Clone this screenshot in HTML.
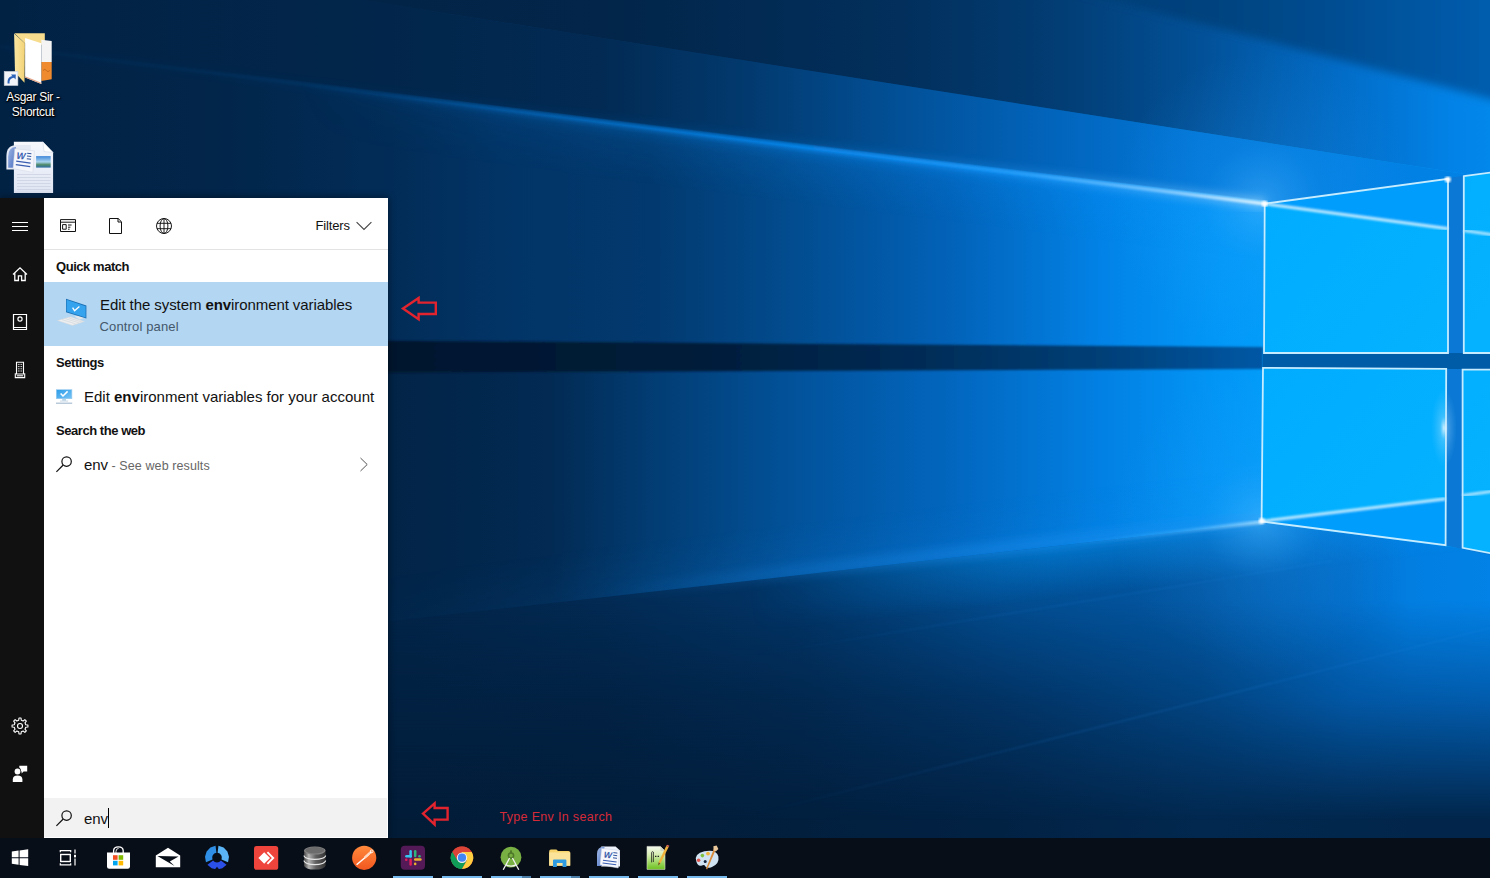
<!DOCTYPE html>
<html><head><meta charset="utf-8"><title>Desktop</title>
<style>
*{box-sizing:border-box;margin:0;padding:0}
html,body{width:1490px;height:878px;overflow:hidden;background:#03386f;font-family:"Liberation Sans",sans-serif}
#wall{position:absolute;left:0;top:0;width:1490px;height:878px;display:block}
.abs{position:absolute}

#rail{left:0;top:198px;width:44px;height:640px;background:#111}
#panel{left:44px;top:198px;width:344px;height:640px;background:#fff;color:#000}
#tabs{left:0;top:0;width:344px;height:52px;border-bottom:1px solid #e3e3e3}
.hd{font-weight:bold;font-size:13px;letter-spacing:-0.45px;color:#111;white-space:nowrap;line-height:16px}
.t15{font-size:15px;letter-spacing:-0.08px;color:#111;white-space:nowrap;line-height:18px}
.t13{font-size:13px;white-space:nowrap;line-height:16px}
#sel{left:0;top:84px;width:344px;height:64px;background:#b3d6f2}
#sbox{left:0;top:600px;width:343px;height:39px;background:#f2f2f2}
#task{left:0;top:838px;width:1490px;height:40px;background:#080e18}
.ind{position:absolute;top:38px;height:2px;background:#76b9ed}
.ind2{position:absolute;top:38px;height:2px;background:#4d7ea8}
.dl{color:#fff;font-size:12px;line-height:15px;text-align:center;white-space:nowrap;text-shadow:0 1px 2px #000,0 0 3px #000,1px 1px 1px #000}
svg{display:block}
</style></head><body>
<svg id="wall" viewBox="0 0 1490 878" width="1490" height="878">
<defs>
<linearGradient id="gT0" gradientUnits="userSpaceOnUse" x1="0" y1="0" x2="1490" y2="0"><stop offset="0.6711" stop-color="#02386c"/><stop offset="0.7262" stop-color="#023e76"/><stop offset="0.8054" stop-color="#02427d"/><stop offset="0.8725" stop-color="#024a8c"/><stop offset="0.9732" stop-color="#0259a7"/><stop offset="1.0000" stop-color="#025cad"/></linearGradient>
<linearGradient id="gWall" gradientUnits="userSpaceOnUse" x1="0" y1="0" x2="1490" y2="0"><stop offset="0.0000" stop-color="#022244"/><stop offset="0.1342" stop-color="#022549"/><stop offset="0.2617" stop-color="#022c57"/><stop offset="0.3356" stop-color="#023466"/><stop offset="0.4362" stop-color="#02396e"/><stop offset="0.5369" stop-color="#024d91"/><stop offset="0.6376" stop-color="#0262b8"/><stop offset="0.7383" stop-color="#0282e6"/><stop offset="0.8188" stop-color="#0298f8"/><stop offset="0.8477" stop-color="#029cf9"/><stop offset="1.0000" stop-color="#029cf9"/></linearGradient>
<linearGradient id="gWallLo" gradientUnits="userSpaceOnUse" x1="0" y1="0" x2="1490" y2="0"><stop offset="0.0000" stop-color="#022040"/><stop offset="0.1342" stop-color="#022244"/><stop offset="0.2617" stop-color="#022447"/><stop offset="0.3020" stop-color="#02264b"/><stop offset="0.3691" stop-color="#022a53"/><stop offset="0.4362" stop-color="#023c72"/><stop offset="0.5369" stop-color="#02539c"/><stop offset="0.6376" stop-color="#0266be"/><stop offset="0.7383" stop-color="#0280e3"/><stop offset="0.8188" stop-color="#0296f6"/><stop offset="0.8477" stop-color="#029cf9"/><stop offset="1.0000" stop-color="#029cf9"/></linearGradient>
<linearGradient id="gT2" gradientUnits="userSpaceOnUse" x1="0" y1="0" x2="1490" y2="0"><stop offset="0.0000" stop-color="#022244"/><stop offset="0.2617" stop-color="#02264b"/><stop offset="0.4027" stop-color="#022a53"/><stop offset="0.5034" stop-color="#023a6f"/><stop offset="0.6040" stop-color="#025097"/><stop offset="0.7047" stop-color="#0264bb"/><stop offset="0.8054" stop-color="#0277d8"/><stop offset="0.9060" stop-color="#0280e3"/><stop offset="1.0000" stop-color="#0282e6"/></linearGradient>
<linearGradient id="gT1" gradientUnits="userSpaceOnUse" x1="0" y1="0" x2="1490" y2="0"><stop offset="0.0000" stop-color="#022447"/><stop offset="0.2617" stop-color="#022447"/><stop offset="0.4027" stop-color="#022549"/><stop offset="0.6040" stop-color="#022f5c"/><stop offset="0.7047" stop-color="#023c72"/><stop offset="0.8054" stop-color="#025097"/><stop offset="0.9060" stop-color="#026eca"/><stop offset="0.9732" stop-color="#0282e6"/><stop offset="1.0000" stop-color="#0287ea"/></linearGradient>
<linearGradient id="gDk" gradientUnits="userSpaceOnUse" x1="0" y1="0" x2="1490" y2="0"><stop offset="0.0000" stop-color="#02142a"/><stop offset="0.2617" stop-color="#02162e"/><stop offset="0.4698" stop-color="#021d3a"/><stop offset="0.6040" stop-color="#022a53"/><stop offset="0.7383" stop-color="#023f77"/><stop offset="0.8477" stop-color="#0258a5"/><stop offset="1.0000" stop-color="#0258a5"/></linearGradient>
<linearGradient id="gF6" gradientUnits="userSpaceOnUse" x1="0" y1="0" x2="1490" y2="0"><stop offset="0.0000" stop-color="#021e3c"/><stop offset="0.2685" stop-color="#022447"/><stop offset="0.4027" stop-color="#022a53"/><stop offset="0.5369" stop-color="#023466"/><stop offset="0.6711" stop-color="#024c8f"/><stop offset="0.8054" stop-color="#0256a2"/><stop offset="0.9060" stop-color="#026eca"/><stop offset="0.9463" stop-color="#027ee1"/><stop offset="1.0000" stop-color="#0282e6"/></linearGradient>
<linearGradient id="gF7" gradientUnits="userSpaceOnUse" x1="0" y1="0" x2="1490" y2="0"><stop offset="0.0000" stop-color="#021e3c"/><stop offset="0.2685" stop-color="#022142"/><stop offset="0.4027" stop-color="#022244"/><stop offset="0.5369" stop-color="#02284f"/><stop offset="0.6711" stop-color="#023364"/><stop offset="0.8054" stop-color="#024481"/><stop offset="0.9060" stop-color="#0257a4"/><stop offset="0.9463" stop-color="#025aa9"/><stop offset="1.0000" stop-color="#025cad"/></linearGradient>
<linearGradient id="gF8" gradientUnits="userSpaceOnUse" x1="0" y1="0" x2="1490" y2="0"><stop offset="0.0000" stop-color="#021a35"/><stop offset="0.2685" stop-color="#021c38"/><stop offset="0.4027" stop-color="#021d3a"/><stop offset="0.5369" stop-color="#021f3e"/><stop offset="0.6711" stop-color="#022244"/><stop offset="0.8054" stop-color="#02284f"/><stop offset="0.9060" stop-color="#02274d"/><stop offset="0.9463" stop-color="#02264b"/><stop offset="1.0000" stop-color="#02264b"/></linearGradient>
<linearGradient id="mF6g" gradientUnits="userSpaceOnUse" x1="0" y1="600" x2="0" y2="700"><stop offset="0" stop-color="#fff"/><stop offset="1" stop-color="#000"/></linearGradient><mask id="mF6" maskUnits="userSpaceOnUse" x="0" y="0" width="1490" height="878"><rect x="0" y="0" width="1490" height="878" fill="url(#mF6g)"/></mask>
<linearGradient id="mF7g" gradientUnits="userSpaceOnUse" x1="0" y1="700" x2="0" y2="820"><stop offset="0" stop-color="#fff"/><stop offset="1" stop-color="#000"/></linearGradient><mask id="mF7" maskUnits="userSpaceOnUse" x="0" y="0" width="1490" height="878"><rect x="0" y="0" width="1490" height="878" fill="url(#mF7g)"/></mask>
<linearGradient id="gRayA" gradientUnits="userSpaceOnUse" x1="0" y1="0" x2="1263" y2="0">
<stop offset="0" stop-color="#0a8cf5" stop-opacity="0.02"/><stop offset="0.3" stop-color="#0a8cf5" stop-opacity="0.08"/><stop offset="0.6" stop-color="#0a8cf5" stop-opacity="0.3"/><stop offset="0.8" stop-color="#2aa4ff" stop-opacity="0.7"/><stop offset="0.92" stop-color="#7cc8ff" stop-opacity="0.95"/><stop offset="1" stop-color="#d8f2ff" stop-opacity="1"/></linearGradient>
<linearGradient id="gBelowA" gradientUnits="userSpaceOnUse" x1="600" y1="118.3" x2="592.6" y2="177.8"><stop offset="0.0000" stop-color="#0a8cf5" stop-opacity="0.00"/><stop offset="0.0250" stop-color="#0a8cf5" stop-opacity="0.30"/><stop offset="0.0667" stop-color="#0a8cf5" stop-opacity="0.75"/><stop offset="0.1167" stop-color="#0a8cf5" stop-opacity="0.45"/><stop offset="0.1667" stop-color="#0a8cf5" stop-opacity="0.25"/><stop offset="0.3333" stop-color="#0a8cf5" stop-opacity="0.12"/><stop offset="0.6667" stop-color="#0a8cf5" stop-opacity="0.05"/><stop offset="1.0000" stop-color="#0a8cf5" stop-opacity="0.00"/></linearGradient>
<linearGradient id="gAboveA" gradientUnits="userSpaceOnUse" x1="600" y1="118" x2="606" y2="68">
<stop offset="0" stop-color="#1c8cf0" stop-opacity="0.12"/><stop offset="1" stop-color="#1c8cf0" stop-opacity="0"/></linearGradient>
<linearGradient id="gAboveF" gradientUnits="userSpaceOnUse" x1="800" y1="573" x2="794" y2="523">
<stop offset="0" stop-color="#1c8cf0" stop-opacity="0.1"/><stop offset="1" stop-color="#1c8cf0" stop-opacity="0"/></linearGradient>
<radialGradient id="gGlow" gradientUnits="userSpaceOnUse" cx="1263" cy="202" r="150">
<stop offset="0" stop-color="#50b8ff" stop-opacity="0.5"/><stop offset="0.4" stop-color="#2aa0f8" stop-opacity="0.15"/><stop offset="1" stop-color="#2aa0f8" stop-opacity="0"/></radialGradient>
<radialGradient id="gGlow2" gradientUnits="userSpaceOnUse" cx="1262" cy="520" r="150">
<stop offset="0" stop-color="#50b8ff" stop-opacity="0.5"/><stop offset="0.4" stop-color="#2aa0f8" stop-opacity="0.15"/><stop offset="1" stop-color="#2aa0f8" stop-opacity="0"/></radialGradient>
<radialGradient id="gFlare" gradientUnits="userSpaceOnUse" cx="1444" cy="428" r="26">
<stop offset="0" stop-color="#ffffff" stop-opacity="0.8"/><stop offset="0.3" stop-color="#bfe6ff" stop-opacity="0.3"/><stop offset="1" stop-color="#7accff" stop-opacity="0"/></radialGradient>
<linearGradient id="gPane" gradientUnits="userSpaceOnUse" x1="1263" y1="200" x2="1447" y2="360">
<stop offset="0" stop-color="#01acff"/><stop offset="1" stop-color="#04b2ff"/></linearGradient>
<linearGradient id="gPane2" gradientUnits="userSpaceOnUse" x1="1263" y1="368" x2="1447" y2="540">
<stop offset="0" stop-color="#01acff"/><stop offset="1" stop-color="#04b2ff"/></linearGradient>
<linearGradient id="gMaskL" gradientUnits="userSpaceOnUse" x1="300" y1="0" x2="800" y2="0"><stop offset="0" stop-color="#000"/><stop offset="0.3" stop-color="#444"/><stop offset="1" stop-color="#fff"/></linearGradient>
<mask id="mL" maskUnits="userSpaceOnUse" x="0" y="-60" width="1490" height="940"><rect x="0" y="-60" width="1490" height="940" fill="url(#gMaskL)"/></mask>
<linearGradient id="gRayF" gradientUnits="userSpaceOnUse" x1="1060" y1="0" x2="1262" y2="0"><stop offset="0" stop-color="#2aa4ff" stop-opacity="0"/><stop offset="0.6" stop-color="#5cbcff" stop-opacity="0.6"/><stop offset="1" stop-color="#d8f2ff" stop-opacity="1"/></linearGradient>
<linearGradient id="gBelowF" gradientUnits="userSpaceOnUse" x1="1100" y1="538" x2="1106.4" y2="593">
<stop offset="0" stop-color="#0296fa" stop-opacity="0.55"/><stop offset="1" stop-color="#0296fa" stop-opacity="0"/></linearGradient>
<linearGradient id="gMaskR" gradientUnits="userSpaceOnUse" x1="750" y1="0" x2="1050" y2="0"><stop offset="0" stop-color="#000"/><stop offset="1" stop-color="#fff"/></linearGradient>
<linearGradient id="gMaskR2" gradientUnits="userSpaceOnUse" x1="600" y1="0" x2="1000" y2="0"><stop offset="0" stop-color="#000"/><stop offset="1" stop-color="#fff"/></linearGradient>
<mask id="mR2" maskUnits="userSpaceOnUse" x="0" y="0" width="1490" height="878"><rect x="0" y="0" width="1490" height="878" fill="url(#gMaskR2)"/></mask>
<mask id="mR" maskUnits="userSpaceOnUse" x="0" y="0" width="1490" height="878"><rect x="0" y="0" width="1490" height="878" fill="url(#gMaskR)"/></mask>
<mask id="cFloor" maskUnits="userSpaceOnUse" x="0" y="0" width="1490" height="878"><polygon points="0,665.5 1263,522.5 1490,552 1490,878 0,878" fill="#fff"/></mask>
<filter id="b1" x="-5%" y="-5%" width="110%" height="110%"><feGaussianBlur stdDeviation="0.8"/></filter>
<filter id="b2" x="-5%" y="-5%" width="110%" height="110%"><feGaussianBlur stdDeviation="1.5"/></filter>
<filter id="b4" x="-5%" y="-5%" width="110%" height="110%"><feGaussianBlur stdDeviation="4"/></filter>
<filter id="b8" x="-10%" y="-10%" width="120%" height="120%"><feGaussianBlur stdDeviation="8"/></filter>
</defs>
<rect width="1490" height="878" fill="url(#gWall)"/>
<rect x="0" y="356" width="1490" height="522" fill="url(#gWallLo)"/>
<polygon points="0,-57 1490,178 1490,240 1263,200.5 0,44" fill="url(#gT2)"/>
<polygon points="0,0 1490,0 1490,178 0,-57" fill="url(#gT1)"/>
<polygon points="1070,-10 1500,-10 1500,101.4" fill="url(#gT0)" filter="url(#b4)"/>
<polygon points="0,338 1263,347 1263,369 0,374" fill="url(#gDk)" filter="url(#b1)"/>
<g mask="url(#cFloor)">
<rect x="0" y="500" width="1490" height="378" fill="url(#gF8)"/>
<rect x="0" y="500" width="1490" height="378" fill="url(#gF7)" mask="url(#mF7)"/>
<rect x="0" y="500" width="1490" height="378" fill="url(#gF6)" mask="url(#mF6)"/>
<polygon points="700,586.2 1263,522.5 1490,552 1490,700 700,700" fill="url(#gBelowF)" mask="url(#mR)"/>
<g mask="url(#mR)" stroke="#2a8ae6" fill="none"><line x1="700" y1="664" x2="1332" y2="561" stroke-width="1.6" opacity="0.16" filter="url(#b1)"/><line x1="700" y1="828" x2="1490" y2="628" stroke-width="1.6" opacity="0.2" filter="url(#b1)"/></g>

</g>
<g mask="url(#mL)">
<polygon points="0,44 1263,200.5 1263,347 0,338" fill="url(#gBelowA)"/>
<polygon points="0,380 1263,380 1263,522.5 0,665.5" fill="url(#gAboveF)"/>
</g>
<line x1="600" y1="593.5" x2="1263" y2="518.5" stroke="#1a90f0" stroke-width="14" opacity="0.4" filter="url(#b4)" mask="url(#mR2)"/>
<rect x="1060" y="20" width="430" height="380" fill="url(#gGlow)"/>
<rect x="1060" y="340" width="430" height="380" fill="url(#gGlow2)"/>
<line x1="0" y1="46.6" x2="1264.7" y2="203.7" stroke="url(#gRayA)" stroke-width="10" opacity="0.4" filter="url(#b4)"/>
<line x1="0" y1="46.6" x2="1264.7" y2="203.7" stroke="url(#gRayA)" stroke-width="3.6" filter="url(#b1)"/>
<line x1="1060" y1="545.4" x2="1262" y2="522" stroke="url(#gRayF)" stroke-width="3" opacity="0.8" filter="url(#b2)"/>
<polygon points="1264,203 1448,178 1490,172 1490,555 1448,546 1262,521" fill="#0a78d4"/>
<polygon points="1263,353 1490,353 1490,369 1263,369" fill="#015ca8"/>
<polygon points="1264.7,203.7 1448,178.8 1448,353 1264,353" fill="url(#gPane)"/>
<polygon points="1264.7,203.7 1448,178.8 1448,228.6" fill="#019dfd"/>
<polygon points="1263,367.8 1446.2,368.9 1445.6,545.2 1261.6,521.4" fill="url(#gPane2)"/>
<polygon points="1261.6,521.4 1445.5,498.8 1445.6,545.2" fill="#019dfd"/>
<polygon points="1463.8,176.2 1495,172 1495,353 1463.8,353" fill="url(#gPane)"/>
<polygon points="1462.6,369.6 1495,369.6 1495,554 1462.6,547.8" fill="url(#gPane2)"/>
<line x1="1264.7" y1="203.7" x2="1448" y2="228.6" stroke="#d4f0ff" stroke-width="3.2" opacity="0.85" filter="url(#b1)"/>
<line x1="1261.6" y1="521.4" x2="1445.5" y2="498.8" stroke="#d4f0ff" stroke-width="3.2" opacity="0.85" filter="url(#b1)"/>
<line x1="1463.8" y1="230.6" x2="1495" y2="235" stroke="#d4f0ff" stroke-width="3" opacity="0.8" filter="url(#b1)"/>
<line x1="1462.6" y1="495.4" x2="1495" y2="491" stroke="#d4f0ff" stroke-width="3" opacity="0.8" filter="url(#b1)"/>
<g fill="none" stroke="#c6ecff" stroke-width="1.8">
<polygon points="1264.7,203.7 1448,178.8 1448,353 1264,353"/>
<polygon points="1263,367.8 1446.2,368.9 1445.6,545.2 1261.6,521.4"/>
<polygon points="1463.8,176.2 1495,172 1495,353 1463.8,353"/>
<polygon points="1462.6,369.6 1495,369.6 1495,554 1462.6,547.8"/>
</g>
<line x1="1447.6" y1="179" x2="1447.6" y2="353" stroke="#e6f7ff" stroke-width="3.4" filter="url(#b1)"/>
<line x1="1445.8" y1="369" x2="1445.8" y2="545" stroke="#e6f7ff" stroke-width="3" filter="url(#b1)"/>
<ellipse cx="1444" cy="428" rx="26" ry="26" fill="url(#gFlare)" transform="translate(1444 428) scale(0.5 1.5) translate(-1444 -428)"/>
<circle cx="1264.7" cy="203.7" r="3" fill="#fff" filter="url(#b1)"/>
<circle cx="1261.8" cy="521" r="3" fill="#fff" filter="url(#b1)"/>
<circle cx="1447.8" cy="179.4" r="3" fill="#fff" filter="url(#b1)"/>
</svg>

<!-- desktop icons -->
<div class="abs" id="desk">
<svg class="abs" style="left:0;top:28px" width="60" height="62" viewBox="0 28 60 62">
<defs><linearGradient id="fy" x1="0" y1="0" x2="1" y2="0"><stop offset="0" stop-color="#fbe7a2"/><stop offset="1" stop-color="#f3d276"/></linearGradient></defs>
<polygon points="14.4,33.2 44.8,33.2 44.8,45 24.9,43.3" fill="#f6dc8c"/>
<polygon points="41.3,39.7 51.7,41 51.7,62 41.3,62" fill="#f4f4f4"/>
<polygon points="41.3,61.9 51.7,61.9 51.7,79.2 41.3,81" fill="#f08a2e"/>
<path d="M43 70.5q2-2.4 3.4 0t3.4 0" stroke="#b8651c" stroke-width="0.8" fill="none"/>
<polygon points="25.1,37.9 41.3,43.3 41.3,84 25.1,77.4" fill="#fff"/>
<polygon points="25.1,76.2 41.3,82.8 41.3,84 25.1,77.4" fill="#e3a284"/>
<polygon points="14.1,33.4 24.9,43.3 24.5,82.8 15,72.6" fill="url(#fy)"/>
<rect x="4.2" y="71.4" width="13.7" height="14.1" fill="#f2f4f7" stroke="#c9ced6" stroke-width="0.6"/>
<path d="M7.6 83.4 C7.2 78.6 9.4 76.2 12.4 76.2 L11 74.4 L15.8 74.6 L15.6 79.6 L14 77.8 C11.2 78 9.2 79.8 9.6 83.4Z" fill="#2b62b8"/>
</svg>
<div class="abs dl" style="left:1px;top:90px;width:64px;letter-spacing:-0.3px">Asgar Sir -<br>Shortcut</div>
<svg class="abs" style="left:0;top:138px" width="60" height="60" viewBox="0 138 60 60">
<defs><linearGradient id="pg" x1="0" y1="0" x2="0" y2="1"><stop offset="0" stop-color="#f6f8fd"/><stop offset="1" stop-color="#dfe5f3"/></linearGradient>
<linearGradient id="sky" x1="0" y1="0" x2="0" y2="1"><stop offset="0" stop-color="#3f86d8"/><stop offset="0.5" stop-color="#a8d4ee"/><stop offset="0.75" stop-color="#4f8a6a"/><stop offset="1" stop-color="#2e6fa8"/></linearGradient>
<linearGradient id="wb" x1="0" y1="0" x2="1" y2="1"><stop offset="0" stop-color="#9fb6e4"/><stop offset="1" stop-color="#4a6fc0"/></linearGradient></defs>
<polygon points="13.9,141.8 42.9,141.8 53.1,152.4 53.1,192.9 13.9,192.9" fill="url(#pg)"/>
<polygon points="42.9,141.8 53.1,152.4 44,151.6" fill="#fff" stroke="#c9d0e0" stroke-width="0.5"/>
<path d="M17 174.5H50.6M17 177.5H50.6M17 180.5H50.6M17 183.5H50.6M17 186.5H50.6M17 189.5H50.6" stroke="#c9cfe0" stroke-width="0.7"/>
<rect x="36.1" y="156.1" width="14.6" height="11.5" fill="url(#sky)"/>
<path d="M6.4 169.6 V156 Q6.4 145 17 145 H30.8 V169.6Z" fill="#e4e9f4"/>
<path d="M8.2 167.8 V156.6 Q8.2 147 16 147 L14.4 167.8Z" fill="url(#wb)"/>
<polygon points="14.8,148.7 34.4,150.9 32.9,172.4 13,168.7" fill="#f4f6fb" stroke="#cfd5e2" stroke-width="0.5"/>
<text x="16.4" y="158.6" font-family="Liberation Sans, sans-serif" font-style="italic" font-weight="bold" font-size="9.5" fill="#3a5db0" transform="rotate(5 16 158)">W</text>
<path d="M27.2 153.2L31.4 153.7M27 156L31.2 156.5M26.8 158.8L31 159.3" stroke="#33559f" stroke-width="1.1"/>
<path d="M16.2 161.2L30.6 163.2M15.8 164.6L30.2 166.6" stroke="#3a5db0" stroke-width="1.2"/>
</svg>
</div>
<!-- search rail -->
<div class="abs" style="left:0;top:198px;width:388px;height:640px;box-shadow:0 0 7px 1px rgba(0,0,0,0.4)"></div>
<div class="abs" id="rail"></div>
<div class="abs" id="panel">
 <div class="abs" id="tabs"></div>
 <div class="abs t13" style="left:271.5px;top:20px;color:#111;letter-spacing:-0.15px">Filters</div>
 <div class="abs hd" style="left:12px;top:61px">Quick match</div>
 <div class="abs" id="sel"></div>
 <div class="abs t15" style="left:56px;top:98px">Edit the system <b>env</b>ironment variables</div>
 <div class="abs t13" style="left:55.5px;top:121px;color:#44586b;letter-spacing:0.15px">Control panel</div>
 <div class="abs hd" style="left:12px;top:157px">Settings</div>
 <div class="abs t15" style="left:40px;top:190px;letter-spacing:0">Edit <b>env</b>ironment variables for your account</div>
 <div class="abs hd" style="left:12px;top:225px">Search the web</div>
 <div class="abs t15" style="left:40px;top:258px">env<span style="font-size:12.5px;letter-spacing:0.1px;color:#666"> - See web results</span></div>
 <div class="abs" id="sbox"></div>
 <div class="abs t15" style="left:40px;top:612px">env</div>
 <div class="abs" style="left:64px;top:610px;width:1px;height:20px;background:#000"></div>
</div>

<!-- rail icons -->
<svg class="abs" style="left:0;top:198px" width="44" height="640" viewBox="0 198 44 640" fill="none" stroke="#fff" stroke-width="1.1">
<path d="M12 222.5H28M12 226.5H28M12 230.5H28" stroke-width="1"/>
<path d="M13 274.5 L20 267.8 L27 274.5 M14.8 273.2V280.5H18.4V275.8H21.6V280.5H25.2V273.2" stroke-width="1.3" stroke-linejoin="miter"/>
<path d="M13.5 314.5H26.5V329.5H13.5Z M13.5 327.5H26.5" stroke-width="1.2"/><circle cx="20" cy="319" r="2.1" stroke-width="1.2"/>
<path d="M16.5 362.2H23.5V374H16.5Z M15.3 373.2 V377.6H24.7V373.2" stroke-width="1.1"/>
<path d="M17.9 364.4H18.8M19.55 364.4H20.45M21.2 364.4H22.1M17.9 366.6H18.8M19.55 366.6H20.45M21.2 366.6H22.1M17.9 368.8H18.8M19.55 368.8H20.45M21.2 368.8H22.1M17.9 371H18.8M19.55 371H20.45M21.2 371H22.1" stroke-width="1"/><path d="M16.8 375.8H23.2" stroke-width="1.1"/>
<g transform="translate(20 726)"><circle r="2.5" stroke-width="1.1"/><path d="M-1.28 -5.76 L-1.04 -7.93 L1.04 -7.93 L1.28 -5.76 L3.17 -4.98 L4.87 -6.35 L6.35 -4.87 L4.98 -3.17 L5.76 -1.28 L7.93 -1.04 L7.93 1.04 L5.76 1.28 L4.98 3.17 L6.35 4.87 L4.87 6.35 L3.17 4.98 L1.28 5.76 L1.04 7.93 L-1.04 7.93 L-1.28 5.76 L-3.17 4.98 L-4.87 6.35 L-6.35 4.87 L-4.98 3.17 L-5.76 1.28 L-7.93 1.04 L-7.93 -1.04 L-5.76 -1.28 L-4.98 -3.17 L-6.35 -4.87 L-4.87 -6.35 L-3.17 -4.98Z" stroke-width="1.1" stroke-linejoin="round"/></g>
<g stroke="none" fill="#fff"><circle cx="17.5" cy="771.5" r="2.9"/><path d="M12.8 782 V779.6 Q12.8 775.6 17.5 775.6 Q22.4 775.6 22.4 779.6 V782Z"/><path d="M19.3 765.8H27.2V771.6H23.6L21.6 773.6V771.6H21.2 Q21 768.2 19.3 767.4Z"/></g>
</svg>
<!-- panel icons -->
<svg class="abs" style="left:44px;top:198px" width="344" height="640" viewBox="44 198 344 640" fill="none" stroke="#111" stroke-width="1.1">
<path d="M60.5 219.6H75.5V231.5H60.5Z M60.5 222.2H75.5 M62.6 224.6H66.2V229.2H62.6Z M68 225H71.6 M68 227.2H70.4 M68 229.2H69.6" stroke-width="1"/>
<path d="M109.5 218.5H118.2L121.5 221.8V233.5H109.5Z M118 218.6V222H121.4" stroke-width="1"/>
<g stroke-width="0.95"><circle cx="164" cy="226" r="7.5"/><ellipse cx="164" cy="226" rx="3.9" ry="7.5"/><path d="M157 223.3H171M157 228.7H171M164 218.5V233.5"/></g>
<path d="M356.6 222.2L364 229.5L371.4 222.2" stroke="#444" stroke-width="1.1"/>
<g stroke-width="1.2"><circle cx="66.6" cy="461.6" r="4.7"/><path d="M63.2 465L56.4 471.8"/></g>
<path d="M360.5 458L367.2 464.5L360.5 471" stroke="#555" stroke-width="1"/>
<g stroke-width="1.2"><circle cx="66.6" cy="815.6" r="4.7"/><path d="M63.2 819L56.4 825.8"/></g>
</svg>

<!-- result icons -->
<svg class="abs" style="left:52px;top:294px" width="40" height="36" viewBox="52 294 40 36">
<polygon points="56.8,320.4 70.6,316.6 85,321.4 72.4,325.8" fill="#d9dde0"/>
<polygon points="58.6,320.5 70.6,317.3 83,321.4 72.4,325" fill="#eceeef"/>
<path d="M62 319.6L75.6 323.9M65.4 318.7L79 322.8M68.6 317.9L82 322" stroke="#cfd4d8" stroke-width="0.6"/>
<polygon points="74.6,316.6 80.4,315 85.4,317.4 79.6,319.4" fill="#e4e7ea"/>
<polygon points="66,298.8 86.4,305.6 86.4,318.6 66,312.2" fill="#1b6fb3"/>
<polygon points="66.6,299.8 85.6,306.2 85.6,317.4 66.6,311.4" fill="#36a3ee"/>
<path d="M72.6 307.6L74.6 310.8L79.4 306.6" fill="none" stroke="#fff" stroke-width="1.3"/>
</svg>
<svg class="abs" style="left:54px;top:387px" width="20" height="19" viewBox="54 387 20 19">
<defs><linearGradient id="scr" x1="0" y1="0" x2="1" y2="1"><stop offset="0" stop-color="#2f9ee9"/><stop offset="1" stop-color="#74c2f4"/></linearGradient></defs>
<rect x="56" y="389.2" width="16.2" height="9.8" fill="#9ccdf0"/>
<rect x="56.8" y="390" width="14.6" height="8.2" fill="url(#scr)"/>
<path d="M60.6 393.4L63 396L67.6 391.4" fill="none" stroke="#fff" stroke-width="1.5"/>
<rect x="62.2" y="399" width="3.8" height="1.8" fill="#b9d3e6"/>
<rect x="60" y="400.6" width="8.2" height="0.9" fill="#c5d6e3"/>
<rect x="56" y="402.6" width="16.2" height="1.2" fill="#a9bfd3"/>
</svg>
<!-- annotations -->
<div class="abs" style="left:499.5px;top:809px;font-size:12.5px;line-height:16px;letter-spacing:0.32px;color:#d62a38;white-space:nowrap" id="anno">Type Env In search</div>

<svg class="abs" style="left:396px;top:290px" width="60" height="40" viewBox="396 290 60 40" fill="none" stroke="#e3242f" stroke-width="2.4" stroke-linejoin="miter">
<path d="M403 308.6L418.6 298V302.6H435.8V314H418.6V319.2Z"/>
</svg>
<svg class="abs" style="left:414px;top:796px" width="44" height="36" viewBox="414 796 44 36" fill="none" stroke="#e3242f" stroke-width="2.4" stroke-linejoin="miter">
<path d="M423 813.6L434.6 803.4V808H447.6V819.6H434.6V824.4Z"/>
</svg>
<!-- taskbar -->
<div class="abs" id="task">
<div class="ind" style="left:393px;width:40px"></div>
<div class="ind" style="left:442px;width:40px"></div>
<div class="ind" style="left:491px;width:31px"></div><div class="ind2" style="left:522px;width:9px"></div>
<div class="ind" style="left:540px;width:31px"></div><div class="ind2" style="left:571px;width:9px"></div>
<div class="ind" style="left:589px;width:40px"></div>
<div class="ind" style="left:638px;width:40px"></div>
<div class="ind" style="left:687px;width:40px"></div>
<svg class="abs" style="left:0;top:0" width="740" height="40" viewBox="0 838 740 40">
<defs>
<linearGradient id="dbg" x1="0" y1="0" x2="1" y2="0"><stop offset="0" stop-color="#444"/><stop offset="0.22" stop-color="#b4b4b4"/><stop offset="0.55" stop-color="#606060"/><stop offset="1" stop-color="#333"/></linearGradient>
<linearGradient id="pm" x1="0" y1="0" x2="0" y2="1"><stop offset="0" stop-color="#ff8a3c"/><stop offset="1" stop-color="#f2571f"/></linearGradient>
<linearGradient id="npp" x1="0" y1="0" x2="0" y2="1"><stop offset="0" stop-color="#f4f8ee"/><stop offset="0.35" stop-color="#d8eeb4"/><stop offset="1" stop-color="#6cc21e"/></linearGradient>
<linearGradient id="wd" x1="0" y1="0" x2="1" y2="1"><stop offset="0" stop-color="#a9c0ea"/><stop offset="1" stop-color="#3f68bd"/></linearGradient>
</defs>
<!-- start -->
<path d="M11.8 851.6L18.6 850.6V857.2H11.8Z M19.6 850.5L28.2 849.3V857.2H19.6Z M11.8 858.2H18.6V864.8L11.8 863.8Z M19.6 858.2H28.2V866L19.6 864.9Z" fill="#fff"/>
<!-- task view -->
<g fill="none" stroke="#fff"><path d="M60.3 852.2V850.7H70.7V852.2M60.3 863.3V864.8H70.7V863.3" stroke-width="1.2"/><rect x="60.7" y="854.5" width="9.6" height="7" stroke-width="1.4"/><path d="M75 849.6V853.6M75 858.6V865.4" stroke-width="1.2"/><rect x="74" y="854.8" width="2" height="2.6" fill="#fff" stroke="none"/></g>
<!-- store -->
<path d="M107 852.6H130V866.6Q130 868.8 127.8 868.8H109.2Q107 868.8 107 866.6Z" fill="#fff"/>
<path d="M113.6 853V850.8Q113.6 846.8 118.4 846.8Q123.2 846.8 123.2 850.8V853" fill="none" stroke="#fff" stroke-width="1.3"/>
<path d="M116 853V851.4Q116 848.6 118.6 848.4" fill="none" stroke="#fff" stroke-width="0.9"/>
<rect x="113" y="855.2" width="4.6" height="4.6" fill="#f25022"/><rect x="118.6" y="855.2" width="4.6" height="4.6" fill="#7fba00"/><rect x="113" y="860.8" width="4.6" height="4.6" fill="#00a4ef"/><rect x="118.6" y="860.8" width="4.6" height="4.6" fill="#ffb900"/>
<!-- mail -->
<path d="M155.8 855.4L168 847.8L180.2 855.4V867.2H155.8Z" fill="#fff"/>
<path d="M157.4 856L178.6 856.4L169.8 861.4L174.6 866Z" fill="#080e18"/>
<!-- blue ring app -->
<g transform="translate(217 857.6)"><path d="M-1.46 -11.91 L-6.62 -10.01 L-10.39 -6.00 L-11.98 -0.73 L-11.05 4.69 L-4.51 1.91 A4.90 4.90 0 0 1 -0.60 -4.86 Z" fill="#2f8fe6"/><path d="M1.46 -11.91 L6.62 -10.01 L10.39 -6.00 L11.98 -0.73 L11.05 4.69 L4.51 1.91 A4.90 4.90 0 0 0 0.60 -4.86 Z" fill="#5ab4f6"/><path d="M9.58 7.22 L5.35 10.74 L0.00 12.00 L-5.35 10.74 L-9.58 7.22 L-3.91 2.95 A4.90 4.90 0 0 0 3.91 2.95 Z" fill="#2b50e8"/><path d="M-2.6 12.4L0 9.2L2.6 12.4Z" fill="#080e18"/></g>
<!-- anydesk -->
<rect x="254" y="846" width="24.2" height="23.8" rx="2.6" fill="#ef443b"/>
<path d="M258.4 858L264.2 852.2L270 858L264.2 863.8Z" fill="#fff"/><path d="M267.4 852.2L273.2 858L267.4 863.8" fill="none" stroke="#fff" stroke-width="1.9"/>
<!-- db -->
<g><path d="M304 850.6V865.6A10.8 4 0 0 0 325.6 865.6V850.6Z" fill="url(#dbg)"/><ellipse cx="314.8" cy="850.6" rx="10.8" ry="4" fill="#858585"/><ellipse cx="314.8" cy="850.2" rx="9.6" ry="3.2" fill="#6c6c6c"/><path d="M304 855.4A10.8 4 0 0 0 325.6 855.4M304 860.6A10.8 4 0 0 0 325.6 860.6" fill="none" stroke="#e6e6e6" stroke-width="1.1"/></g>
<!-- postman -->
<circle cx="364.2" cy="857.8" r="12.1" fill="url(#pm)"/>
<path d="M356.6 864.8L368.4 854.8L371.4 851.6" stroke="#fff" stroke-width="1.5" fill="none"/><path d="M366 856.6L369.8 852.8M364.6 857.8L367 855.2" stroke="#ffd9c2" stroke-width="2.2"/><circle cx="371.6" cy="851.4" r="1.4" fill="none" stroke="#fff" stroke-width="0.9"/>
<!-- slack -->
<rect x="400.8" y="845.8" width="24.2" height="24" rx="4" fill="#531a57"/>
<g stroke-linecap="round" stroke-width="2.5" fill="none"><path d="M410.6 851.2V856.4" stroke="#36c5f0"/><path d="M406.4 856.2H410.6" stroke="#36c5f0"/><path d="M415.2 851.2V856" stroke="#2eb67d"/><path d="M419.4 856.2H419.5" stroke="#2eb67d"/><path d="M415.2 859.6H420.4" stroke="#ecb22e"/><path d="M415.2 863.8V863.9" stroke="#ecb22e"/><path d="M410.6 859.8V864.4" stroke="#e01e5a"/><path d="M406.2 859.8H406.3" stroke="#e01e5a"/></g>
<!-- chrome -->
<g transform="translate(462 857.7)"><circle r="11.2" fill="#db4437"/><path d="M0 0L-9.7 -5.6A11.2 11.2 0 0 0 0 11.2L4.85 2.8Z" fill="#0f9d58"/><path d="M0 0L4.85 2.8L0 11.2A11.2 11.2 0 0 0 9.7 -5.6L0 -5.6Z" fill="#ffcd40"/><path d="M0 -5.6H9.7A11.2 11.2 0 0 0 -9.7 -5.6L-4.85 2.8Z" fill="#db4437"/><path d="M-9.7 -5.6L-4.85 2.8L0 11.2A11.2 11.2 0 0 1 -9.7 -5.6Z" fill="#0f9d58"/><circle r="5.2" fill="#f1f1f1"/><circle r="4.1" fill="#4285f4"/></g>
<!-- android studio -->
<circle cx="511" cy="857.2" r="10.4" fill="#79b043"/>
<circle cx="511" cy="855.6" r="2.6" fill="none" stroke="#4f7a2a" stroke-width="1.6"/><rect x="510" y="850.4" width="2" height="3" fill="#4f7a2a"/>
<path d="M509.6 858L503.2 869.8M512.4 858L518.8 869.8M505.6 864.6Q511 867.6 516.4 864.6" stroke="#f2f2f2" stroke-width="1.3" fill="none"/>
<!-- explorer -->
<path d="M549.2 851.2Q549.2 849.4 551 849.4H556.4L558 851H568.4Q570.2 851 570.2 852.8V865.6H549.2Z" fill="#f7d36b"/>
<rect x="549.2" y="852.4" width="21" height="13.4" fill="#fbe39a"/>
<path d="M553 867V860.4Q553 859.4 554 859.4H565.4Q566.4 859.4 566.4 860.4V867H562.6V863H556.8V867Z" fill="#2f9be0"/>
<!-- word -->
<path d="M601.2 846.6H615.6L620 850.4V866.4H601.2Z" fill="#eef2fa"/>
<path d="M597 866V854Q597 847 604.6 846.6L601.6 866Z" fill="url(#wd)"/>
<polygon points="601.6,848.4 619.6,850.4 618.2,868 600,864.8" fill="#f6f8fc" stroke="#c8d0e2" stroke-width="0.5"/>
<text x="603.6" y="857.6" font-family="Liberation Sans, sans-serif" font-style="italic" font-weight="bold" font-size="8.6" fill="#3256a8" transform="rotate(6 604 857)">W</text>
<path d="M613.4 852.6L617.4 853.1M613.2 855.2L617.2 855.7M613 857.8L617 858.3" stroke="#33559f" stroke-width="1"/><path d="M603 860.2L616.6 862M602.6 863L616.2 864.8" stroke="#3a5db0" stroke-width="1.1"/>
<!-- notepad++ -->
<path d="M647 846.4H660.4L665 851V869.4H647Z" fill="url(#npp)" stroke="#d8dccf" stroke-width="0.6"/>
<path d="M660.4 846.4L665 851H660.4Z" fill="#cfd6c2"/>
<path d="M651.6 852.4V862.4M653.4 852V862M651.6 852.2Q652.6 851 653.4 852.2" stroke="#222" stroke-width="0.8" fill="none"/><path d="M655 856.4H656.4M657.6 856.4H659" stroke="#222" stroke-width="1.4"/>
<path d="M668.6 847L666.2 846L658.6 862.2L660.4 863.6Z" fill="#f0b23a"/><path d="M668.6 847L666.2 846L667 844.8L669.4 845.8Z" fill="#e26a5a"/><path d="M658.6 862.2L660.4 863.6L658 865.6Z" fill="#7a5520"/>
<!-- paint -->
<path d="M696.2 861Q694 853.6 704.4 851.2Q716.6 849 718.4 856.6Q719.6 864 712 867Q707 869 705.4 866.4Q704.4 864.4 702 865.4Q697.6 866.8 696.2 861Z" fill="#cfe3f2"/>
<circle cx="698.6" cy="860.2" r="1.8" fill="#e0574f"/><circle cx="702.4" cy="855.6" r="1.8" fill="#7fc241"/><circle cx="708" cy="853.6" r="1.9" fill="#f0b43c"/><circle cx="705.2" cy="861.4" r="1.5" fill="#13233c"/>
<path d="M714 848.6L715.8 849.4L707.2 869.4L706 868.8Z" fill="#d98b3a"/><path d="M713.4 846.2L716.6 845.6L718.4 849L715.8 851.6L713.6 850.4Z" fill="#e9c79a"/>
</svg>
</div>
</body></html>
